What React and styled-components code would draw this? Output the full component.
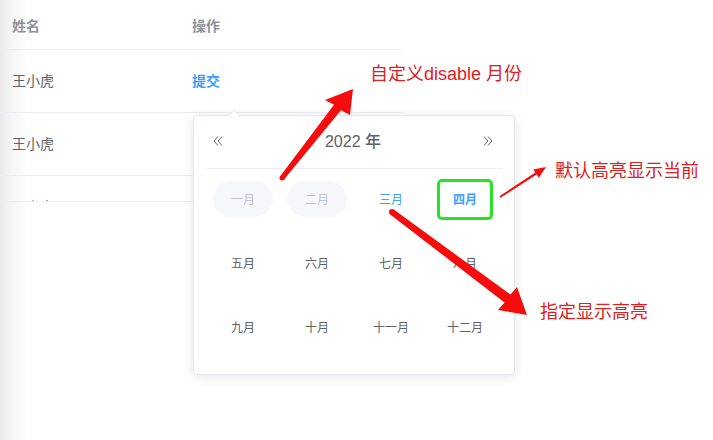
import * as React from 'react';
import styled, { createGlobalStyle } from 'styled-components';

const GlobalStyle = createGlobalStyle`
  html, body {
    margin: 0;
    padding: 0;
    background: #fff;
  }
  body {
    font-family: "Liberation Sans", "Noto Sans CJK SC", sans-serif;
  }
`;

const rows = [{ name: '王小虎' }, { name: '王小虎' }, { name: '王小虎' }];

const months = [
  '一月', '二月', '三月', '四月',
  '五月', '六月', '七月', '八月',
  '九月', '十月', '十一月', '十二月'
];

const DISABLED = [0, 1];
const HIGHLIGHT = 2;
const CURRENT = 3;

function DoubleChevron({ dir }) {
  const d =
    dir === 'left'
      ? 'M5 0.5 L1 5 L5 9.5 M9 0.5 L5 5 L9 9.5'
      : 'M1 0.5 L5 5 L1 9.5 M5 0.5 L9 5 L5 9.5';
  return (
    <svg width="10" height="10" viewBox="0 0 10 10">
      <path d={d} fill="none" stroke="#606266" strokeWidth="1" />
    </svg>
  );
}

export default function App() {
  return (
    <Page>
      <GlobalStyle />
      <TableWrap>
        <Row header>
          <Cell header>姓名</Cell>
          <Cell header>操作</Cell>
        </Row>
        {rows.map(({ name }, i) => (
          <Row key={i}>
            <Cell>{name}</Cell>
            <Cell>{i === 0 && <Link>提交</Link>}</Cell>
          </Row>
        ))}
      </TableWrap>

      <Popover>
        <PickerHeader>
          <NavButton>
            <DoubleChevron dir="left" />
          </NavButton>
          <Year>2022 年</Year>
          <NavButton>
            <DoubleChevron dir="right" />
          </NavButton>
        </PickerHeader>
        <MonthGrid>
          {months.map((m, i) => (
            <MonthCell key={m}>
              <Month
                disabled={DISABLED.includes(i)}
                highlight={i === HIGHLIGHT}
                current={i === CURRENT}
              >
                {m}
              </Month>
            </MonthCell>
          ))}
        </MonthGrid>
      </Popover>

      <Note style={{ left: 370, top: 63 }}>自定义disable 月份</Note>
      <Note style={{ left: 555, top: 160 }}>默认高亮显示当前</Note>
      <Note style={{ left: 540, top: 301 }}>指定显示高亮</Note>

      <Arrows width="713" height="440" viewBox="0 0 713 440">
        <circle cx="282" cy="178" r="2.5" fill="#f50d0d" />
        <polygon
          fill="#f50d0d"
          points="280,176.4 334,104.7 325,100 353,89 350,115 341,110.3 284,179.6"
        />
        <polygon
          fill="#f50d0d"
          points="499.5,196.2 535.3,172.6 533.3,169.4 546,167 538.7,177.8 536.7,174.6 500.5,197.8"
        />
        <circle cx="392" cy="212" r="3" fill="#f50d0d" />
        <polygon
          fill="#f50d0d"
          points="393.8,209.6 510.5,294.5 517,287 527,315 498,310 504.5,302.5 390.2,214.4"
        />
      </Arrows>
    </Page>
  );
}

const Page = styled.div`
  position: relative;
  width: 713px;
  height: 440px;
  overflow: hidden;
  background: linear-gradient(to right, #e9e9e9 0px, #f6f6f6 12px, #ffffff 28px);
`;

const TableWrap = styled.div`
  width: 402px;
  height: 201px;
  overflow: hidden;
  border-bottom: 1px solid #ebeef5;
`;

const Row = styled.div`
  display: grid;
  grid-template-columns: 180px 1fr;
  align-items: center;
  height: ${(p) => (p.header ? '49px' : '62px')};
  border-bottom: 1px solid #ebeef5;
`;

const Cell = styled.div`
  padding: ${(p) => (p.header ? '1px 12px 0' : '0 12px 3px')};
  font-size: 14px;
  color: ${(p) => (p.header ? '#909399' : '#606266')};
  font-weight: ${(p) => (p.header ? 'bold' : 'normal')};
`;

const Link = styled.span`
  color: #409eff;
  font-weight: bold;
`;

const Popover = styled.div`
  position: absolute;
  left: 193px;
  top: 115px;
  width: 320px;
  height: 258px;
  background: #fff;
  border: 1px solid #e4e7ed;
  border-radius: 4px;
  box-shadow: 0 2px 12px 0 rgba(0, 0, 0, 0.1);

  &::before,
  &::after {
    content: '';
    position: absolute;
    left: 34px;
    width: 0;
    height: 0;
    border: 6px solid transparent;
    border-top-width: 0;
  }
  &::before {
    top: -6px;
    border-bottom-color: #e4e7ed;
  }
  &::after {
    top: -5px;
    border-bottom-color: #fff;
  }
`;

const PickerHeader = styled.div`
  display: flex;
  align-items: center;
  justify-content: space-between;
  box-sizing: border-box;
  height: 53px;
  margin: 0 12px;
  padding: 0 9px 4px 7px;
  border-bottom: 1px solid #ebeef5;
`;

const NavButton = styled.span`
  display: flex;
  align-items: center;
  padding-top: 2px;
`;

const Year = styled.span`
  font-size: 16px;
  font-weight: 500;
  color: #606266;
`;

const MonthGrid = styled.div`
  display: grid;
  grid-template-columns: repeat(4, 1fr);
  grid-auto-rows: 64px;
  margin-top: -2px;
  padding: 0 12px;
`;

const MonthCell = styled.div`
  display: flex;
  align-items: center;
  justify-content: center;
`;

const Month = styled.span`
  display: flex;
  align-items: center;
  justify-content: center;
  box-sizing: border-box;
  width: ${(p) => (p.current ? '56px' : '60px')};
  height: ${(p) => (p.current ? '41px' : '36px')};
  border-radius: ${(p) => (p.current ? '5px' : '18px')};
  font-size: 12px;
  padding-bottom: 1px;
  color: ${(p) =>
    p.disabled ? '#c0c4cc' : p.highlight || p.current ? '#409eff' : '#606266'};
  font-weight: ${(p) => (p.current ? 'bold' : 'normal')};
  background: ${(p) => (p.disabled ? '#f5f7fa' : 'transparent')};
  border: ${(p) => (p.current ? '3px solid #27e327' : 'none')};
`;

const Note = styled.div`
  position: absolute;
  font-size: 18px;
  line-height: 22px;
  color: #e0201e;
  white-space: nowrap;
`;

const Arrows = styled.svg`
  position: absolute;
  left: 0;
  top: 0;
  pointer-events: none;
`;
